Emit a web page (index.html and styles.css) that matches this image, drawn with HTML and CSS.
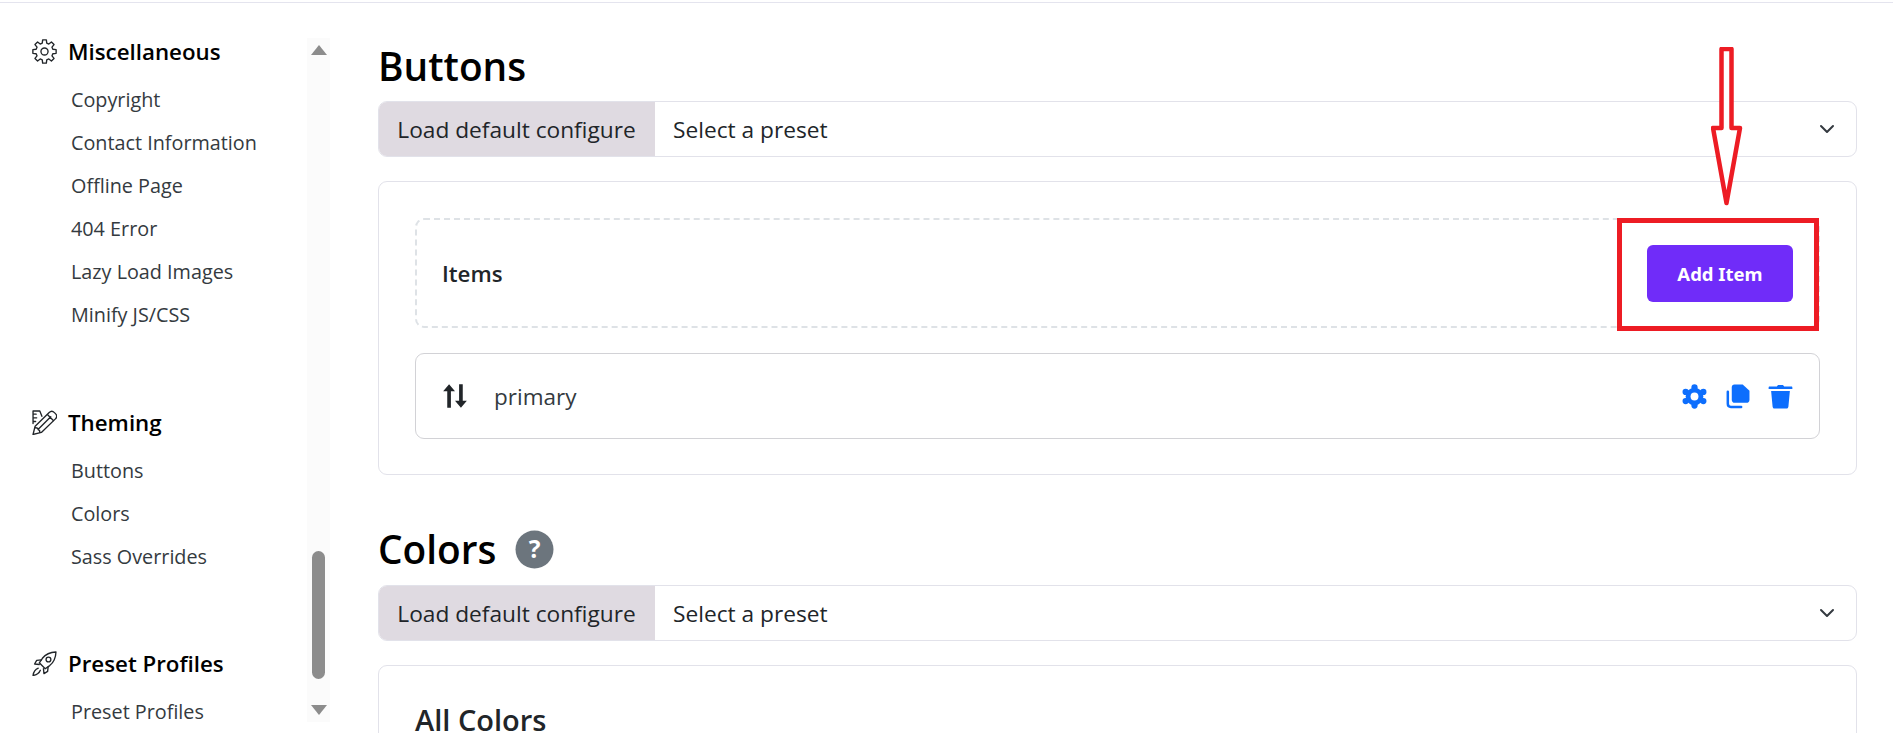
FILE: index.html
```html
<!DOCTYPE html>
<html lang="en">
<head>
<meta charset="utf-8">
<title>Buttons</title>
<link rel="stylesheet" href="styles.css">
</head>
<body>
<div class="page">
  <aside class="sidebar">
    <nav class="nav">
      <section class="group">
        <h3 class="group-title">
          <svg class="nav-icon" viewBox="0 0 24 24"><circle cx="12" cy="12" r="3.4"/><path transform="translate(12 12)" d="M8.02-2.15 11.16-1.77V1.77L8.02 2.15 7.19 4.15 9.14 6.64 6.64 9.14 4.15 7.19 2.15 8.02 1.77 11.16H-1.77L-2.15 8.02-4.15 7.19-6.64 9.14-9.14 6.64-7.19 4.15-8.02 2.15-11.16 1.77V-1.77L-8.02-2.15-7.19-4.15-9.14-6.64-6.64-9.14-4.15-7.19-2.15-8.02-1.77-11.16H1.77L2.15-8.02 4.15-7.19 6.64-9.14 9.14-6.64 7.19-4.15Z"/></svg>
          Miscellaneous
        </h3>
        <ul class="links">
          <li>Copyright</li>
          <li>Contact Information</li>
          <li>Offline Page</li>
          <li>404 Error</li>
          <li>Lazy Load Images</li>
          <li>Minify JS/CSS</li>
        </ul>
      </section>
      <section class="group">
        <h3 class="group-title">
          <svg class="nav-icon" viewBox="0 0 24 24"><path d="M1 23.500 3 15.500 16.500 2.500C18 1 20 1 21.500 2.500L22.500 3.500C24 5 24 7 22.500 8.500L9 21.500Z"/><path d="M3.300 17C5 17 6 18 6 19 7 19 7.500 20 7.500 21.500M15 4.500 20.500 10M6 18.500 18 6.500"/><path d="M1 13V1H7.500L9.500 6M1 4H4M1 7.500H4.500M1 11H3.500"/></svg>
          Theming
        </h3>
        <ul class="links">
          <li>Buttons</li>
          <li>Colors</li>
          <li>Sass Overrides</li>
        </ul>
      </section>
      <section class="group">
        <h3 class="group-title">
          <svg class="nav-icon" viewBox="0 0 24 24"><path d="M23 1C17.500 1.200 13 3.200 10 7L7 11.300 12.700 17 17 14C20.800 11 22.800 6.500 23 1Z"/><circle cx="15.800" cy="8.200" r="2.300"/><path d="M9 8.500 4.500 9 2.500 12.500 7 13M15.500 15 15 19.500 11.500 21.700 11 17M6 16.500C3.500 17.500 1.500 20 1 23.500 4.500 23 7 21 8 18.500"/></svg>
          Preset Profiles
        </h3>
        <ul class="links">
          <li>Preset Profiles</li>
        </ul>
      </section>
    </nav>
    <div class="scrollbar">
      <span class="arrow-up"></span>
      <span class="thumb"></span>
      <span class="arrow-down"></span>
    </div>
  </aside>

  <main class="content">
    <h1 class="title">Buttons</h1>
    <div class="input-group">
      <span class="addon">Load default configure</span>
      <span class="select">Select a preset
        <svg class="chevron" viewBox="0 0 16 16"><path d="M2 5l6 6 6-6"/></svg>
      </span>
    </div>
    <div class="card card-items">
      <div class="items-head">
        <span class="items-label">Items</span>
        <button class="add-btn">Add Item</button>
      </div>
      <div class="item-row">
        <svg class="sort-icon" viewBox="0 0 26 26"><path d="M7.500 2 2 8.500H5.800V24H9.200V8.500H13ZM16.800 2V17.500H13L18.500 24 24 17.500H20.200V2Z"/></svg>
        <span class="item-name">primary</span>
        <span class="item-actions">
          <svg class="act" viewBox="0 0 24 24"><circle cx="12" cy="3.300" r="3"/><circle cx="20.500" cy="7.650" r="3"/><circle cx="20.500" cy="16.350" r="3"/><circle cx="12" cy="20.700" r="3"/><circle cx="3.500" cy="16.350" r="3"/><circle cx="3.500" cy="7.650" r="3"/><circle cx="12" cy="12" r="8.500"/><circle class="act-hole" cx="12" cy="12" r="3.800"/></svg>
          <svg class="act" viewBox="0 0 24 24"><path d="M9 .5H17L23.500 6.500V15C23.500 17 22.500 18 20.500 18H9.500C7.500 18 6.500 17 6.500 15V3C6.500 1.500 7.500.5 9 .5Z"/><path class="act-line" d="M2.700 7.500V19C2.700 21 3.700 22 5.700 22H15.500"/></svg>
          <svg class="act" viewBox="0 0 24 24"><path d="M8.500 2.500C8.800 1.500 9.500 1 10.300 1H13.700C14.500 1 15.200 1.500 15.500 2.500H22.500C23.100 2.500 23.400 3 23.400 3.500V4.800H.6V3.500C.6 3 .9 2.500 1.500 2.500ZM3 6.800H21L19.600 21.500C19.500 22.500 18.700 23.500 17.900 23.500H6.100C5.200 23.500 4.500 22.500 4.400 21.500Z"/></svg>
        </span>
      </div>
    </div>

    <h1 class="title title-colors">Colors
      <svg class="help" viewBox="0 0 38 38"><circle cx="19" cy="19" r="18.500"/><text x="19" y="27" text-anchor="middle">?</text></svg>
    </h1>
    <div class="input-group">
      <span class="addon">Load default configure</span>
      <span class="select">Select a preset
        <svg class="chevron" viewBox="0 0 16 16"><path d="M2 5l6 6 6-6"/></svg>
      </span>
    </div>
    <div class="card card-colors">
      <h2 class="card-title">All Colors</h2>
    </div>
  </main>
</div>

<div class="annot-box"></div>
<svg class="annot-arrow" viewBox="0 0 32 160"><path d="M10.500 2H20.500V81H29L15.500 156 2 81H10.500Z"/></svg>
</body>
</html>
```
FILE: styles.css
```css
* { box-sizing: border-box; }
html, body { margin: 0; height: 733px; overflow: hidden; background: #fff; }
body { font-family: "Open Sans", "Noto Sans", "Liberation Sans", sans-serif; color: #212529; position: relative; }

.page { display: flex; height: 731px; margin-top: 2px; border-top: 1px solid #e4e4ee; }

/* Sidebar */
.sidebar { width: 378px; flex: none; display: flex; padding: 35px 48px 11px 32px; overflow: hidden; }
.nav { width: 275px; flex: none; }
.group { margin-bottom: 72.500px; }
.group-title { display: flex; align-items: center; gap: 11px; margin: 0; height: 26px; font-size: 22.300px; font-weight: 600; color: #000; }
.nav-icon { width: 25px; height: 25px; fill: none; stroke: #212529; stroke-width: 1.300; stroke-linejoin: round; stroke-linecap: round; flex: none; }
.links { list-style: none; margin: 13.500px 0 0; padding: 0 0 0 39px; }
.links li { height: 43.200px; line-height: 43.200px; font-size: 19.800px; color: #343a40; white-space: nowrap; }

.scrollbar { width: 23px; flex: none; background: #fbfbfb; position: relative; }
.arrow-up, .arrow-down { width: 0; height: 0; border-left: 8px solid transparent; border-right: 8px solid transparent; position: absolute; left: 4px; }
.arrow-up { top: 7px; border-bottom: 10px solid #8c8c8c; }
.arrow-down { bottom: 7px; border-top: 10px solid #8c8c8c; }
.thumb { position: absolute; left: 5px; top: 513px; width: 13px; height: 128px; background: #8c8c8c; border-radius: 7px; }

/* Content */
.content { flex: 1; padding: 0 36px 0 0; min-width: 0; }
.title { display: flex; align-items: center; margin: 0; height: 98px; padding-top: 29px; font-size: 38.800px; font-weight: 600; color: #000; line-height: 1; }
.title-colors { height: 110px; padding-top: 39px; gap: 19px; }
.help { width: 39px; height: 39px; flex: none; fill: #6c757d; }
.help text { fill: #fff; font-size: 24px; font-weight: 700; font-family: "Open Sans", sans-serif; }

.input-group { display: flex; height: 56px; border: 1px solid #e2e2ea; border-radius: 9px; overflow: hidden; font-size: 22.700px; }
.addon { width: 277px; flex: none; display: flex; align-items: center; justify-content: center; background: #dfdae1; color: #212529; white-space: nowrap; margin: -1px 0 -1px -1px; }
.select { flex: 1; display: flex; align-items: center; justify-content: space-between; padding: 0 21px 0 18px; color: #212529; white-space: nowrap; }
.chevron { width: 16px; height: 16px; fill: none; stroke: #343a40; stroke-width: 2; stroke-linecap: round; stroke-linejoin: round; }

.card { border: 1px solid #e2e2ea; border-radius: 9px; margin-top: 24px; padding: 36px 36px 0; }
.card-items { height: 294px; }
.items-head { display: flex; align-items: center; justify-content: space-between; height: 110px; border: 2px dashed #dee2e6; border-radius: 9px; padding: 0 25px; }
.items-label { font-size: 22.300px; font-weight: 600; }
.add-btn { width: 146px; height: 57px; background: #702cf9; color: #fff; border: 0; border-radius: 6px; font: 700 18.500px "Noto Sans", sans-serif; padding: 0; }
.item-row { display: flex; align-items: center; height: 86px; margin-top: 25px; padding: 0 26px 0 25px; border: 1px solid #d2d2d6; border-radius: 9px; }
.sort-icon { width: 28px; height: 28px; fill: #212529; flex: none; }
.item-name { margin-left: 25px; font-size: 22.500px; color: #343a40; }
.item-actions { margin-left: auto; display: flex; gap: 18px; }
.act { width: 25px; height: 25px; fill: #0d6efd; }
.act-hole { fill: #fff; }
.act-line { fill: none; stroke: #0d6efd; stroke-width: 2.400; stroke-linecap: round; }

.card-colors { height: 200px; }
.card-title { margin: 0; padding-top: 1px; font-size: 29px; font-weight: 600; line-height: 1.2; }

/* Red annotations drawn over the page */
.annot-box { position: absolute; left: 1617px; top: 218px; width: 202px; height: 113px; border: 5px solid #ed1c24; }
.annot-arrow { position: absolute; left: 1711px; top: 47px; width: 32px; height: 160px; fill: #fff; stroke: #ed1c24; stroke-width: 4.500; stroke-linejoin: round; }
```
